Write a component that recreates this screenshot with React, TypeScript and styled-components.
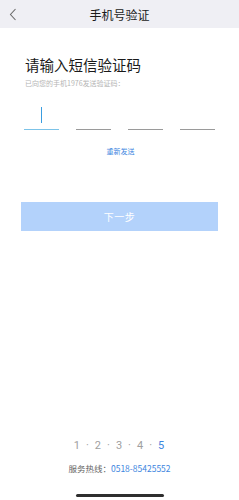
import styled, { createGlobalStyle } from 'styled-components';

const GlobalStyle = createGlobalStyle`
  html, body {
    margin: 0;
    padding: 0;
    background: #ffffff;
  }
  body {
    font-family: "Noto Sans CJK SC", "Noto Sans", sans-serif;
  }
`;

const Page = styled.div`
  width: 239px;
  height: 500px;
  display: flex;
  flex-direction: column;
  background: #ffffff;
  overflow: hidden;
`;

const NavBar = styled.div`
  height: 28px;
  background: #efeff4;
  display: grid;
  grid-template-columns: 28px 1fr 28px;
  align-items: center;
`;

const BackButton = styled.div`
  display: flex;
  align-items: center;
  justify-content: center;
  padding-right: 2px;
`;

const NavTitle = styled.div`
  text-align: center;
  font-size: 12px;
  line-height: 1;
  color: #1a1a1a;
  padding-top: 1px;
`;

const Body = styled.div`
  display: flex;
  flex-direction: column;
  padding: 0 24px;
`;

const Heading = styled.h1`
  margin: 30px 0 0 1px;
  font-size: 14.5px;
  line-height: 1;
  font-weight: 400;
  color: #1a1a1a;
`;

const Hint = styled.p`
  margin: 7px 0 0 1px;
  font-size: 7px;
  line-height: 1;
  color: #b5b5b5;
`;

const CodeRow = styled.div`
  display: flex;
  gap: 17px;
  margin-top: 20px;
`;

const CodeBox = styled.div<{ $active?: boolean }>`
  width: 35px;
  height: 22px;
  border-bottom: 1px solid ${p => (p.$active ? '#7cc3e8' : '#9a9a9a')};
  position: relative;
`;

const Cursor = styled.span`
  position: absolute;
  left: 17px;
  top: 0;
  width: 1px;
  height: 16px;
  background: #3a9de0;
`;

const Resend = styled.div`
  margin-top: 18px;
  text-align: center;
  font-size: 7px;
  line-height: 1;
  color: #3d86e0;
  padding-left: 2px;
`;

const NextButton = styled.button`
  margin: 47px 21px 0 21px;
  height: 29px;
  border: none;
  background: #b3d2fb;
  color: #ffffff;
  font-family: inherit;
  font-size: 10px;
  letter-spacing: 0.5px;
`;

const Footer = styled.div`
  margin-top: auto;
  display: flex;
  flex-direction: column;
  align-items: center;
`;

const Steps = styled.div`
  display: flex;
  gap: 6px;
  padding-right: 1px;
  font-family: Roboto, "Noto Sans", sans-serif;
  font-size: 11px;
  line-height: 1;
`;

const Step = styled.span<{ $current?: boolean }>`
  color: ${p => (p.$current ? '#3d86e0' : '#a0a0a0')};
`;

const Dot = styled.span`
  color: #a0a0a0;
`;

const Hotline = styled.div`
  margin-top: 13px;
  font-size: 8.5px;
  line-height: 1;
  color: #666666;
`;

const Phone = styled.span`
  color: #3d86e0;
`;

const HomeIndicator = styled.div`
  margin: 22px 0 3px;
  width: 88px;
  height: 3px;
  border-radius: 2px;
  background: #2e2e2e;
`;

export default function App() {
  const steps = [1, 2, 3, 4, 5];
  return (
    <>
      <GlobalStyle />
      <Page>
        <NavBar>
          <BackButton>
            <svg width="8" height="13" viewBox="0 0 8 13">
              <path d="M6.5 1 L1.5 6.5 L6.5 12" fill="none" stroke="#6b6b6b" strokeWidth="1.1" />
            </svg>
          </BackButton>
          <NavTitle>手机号验证</NavTitle>
          <div />
        </NavBar>
        <Body>
          <Heading>请输入短信验证码</Heading>
          <Hint>已向您的手机1976发送验证码：</Hint>
          <CodeRow>
            <CodeBox $active>
              <Cursor />
            </CodeBox>
            <CodeBox />
            <CodeBox />
            <CodeBox />
          </CodeRow>
          <Resend>重新发送</Resend>
        </Body>
        <NextButton>下一步</NextButton>
        <Footer>
          <Steps>
            {steps.flatMap((s, i) => {
              const item = [<Step key={`s${s}`} $current={s === 5}>{s}</Step>];
              if (i < steps.length - 1) item.push(<Dot key={`d${s}`}>·</Dot>);
              return item;
            })}
          </Steps>
          <Hotline>
            服务热线：<Phone>0518-85425552</Phone>
          </Hotline>
          <HomeIndicator />
        </Footer>
      </Page>
    </>
  );
}
